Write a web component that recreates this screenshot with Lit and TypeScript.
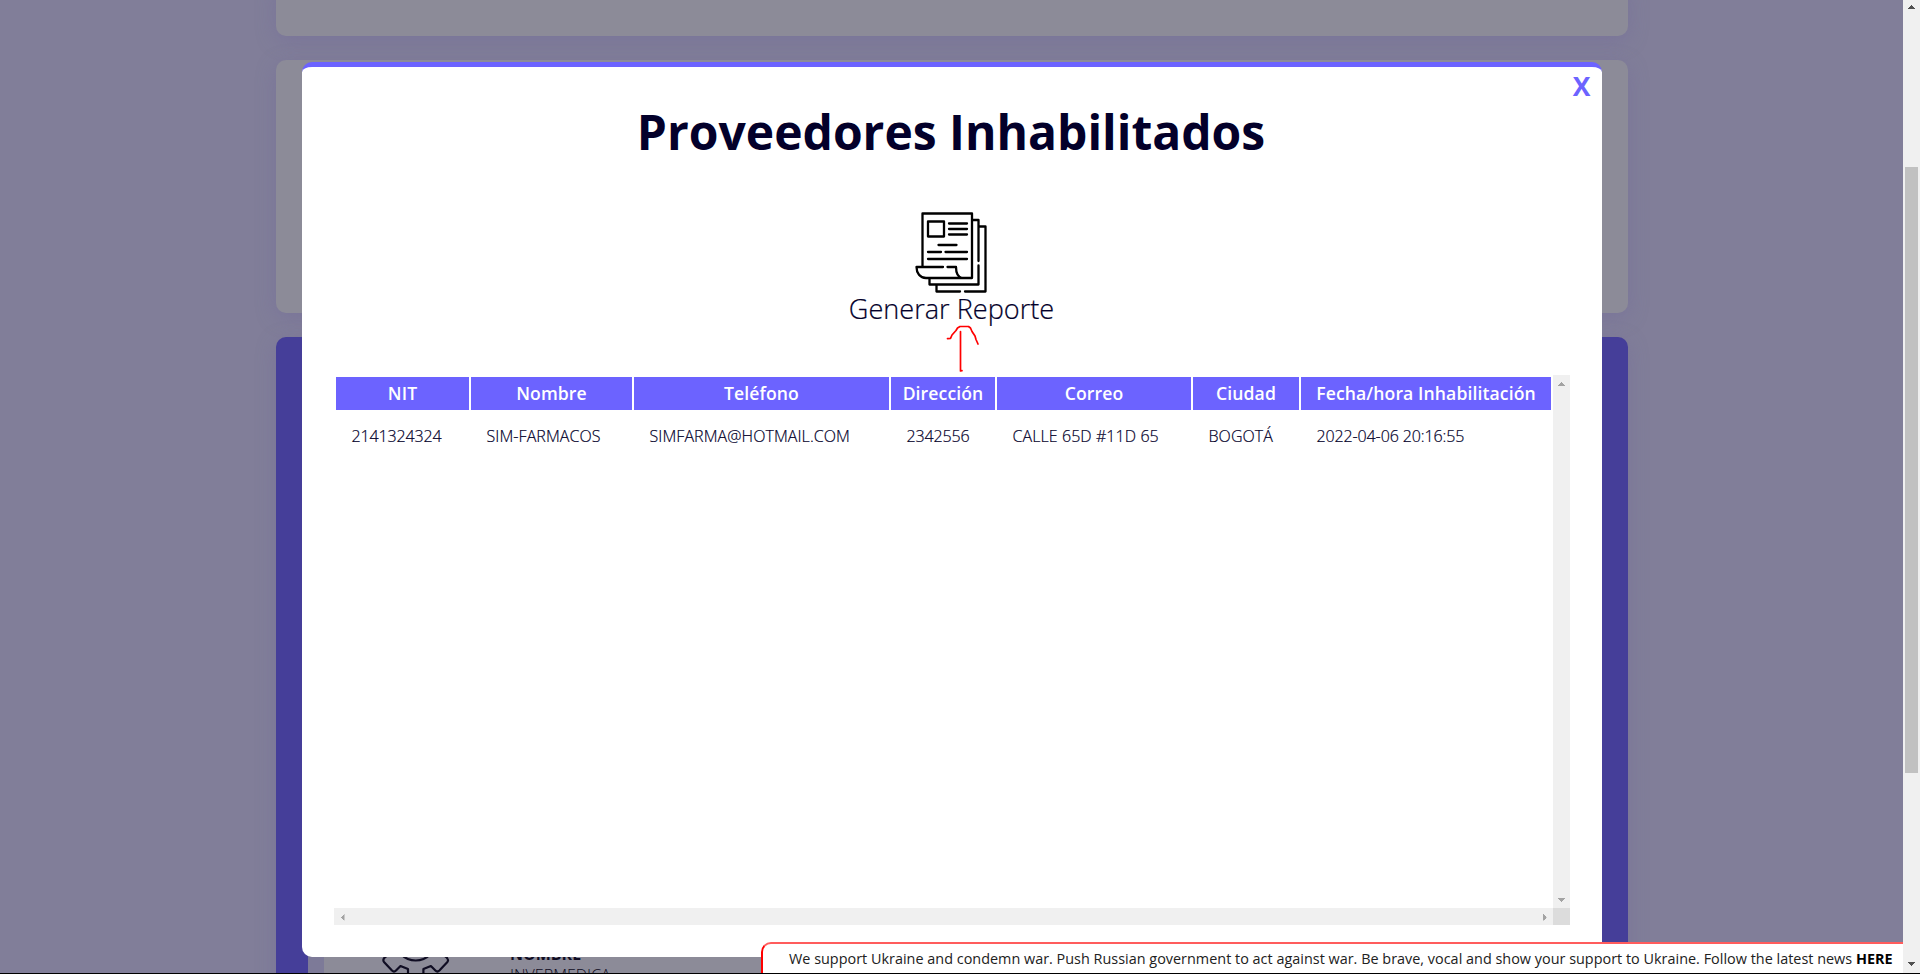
import { LitElement, html, css } from "lit";
import { customElement } from "lit/decorators.js";

const COLUMNS = ["NIT", "Nombre", "Teléfono", "Dirección", "Correo", "Ciudad", "Fecha/hora Inhabilitación"];
const ROWS = [["2141324324", "SIM-FARMACOS", "SIMFARMA@HOTMAIL.COM", "2342556", "CALLE 65D #11D 65", "BOGOTÁ", "2022-04-06 20:16:55"]];

const arrow = (dir: string) => html`<svg class="arrow ${dir}" width="7" height="4" viewBox="0 0 7 4" shape-rendering="crispEdges"><path d="M3 0h1v1h1v1h1v1h1v1H0V3h1V2h1V1h1z" fill="currentColor"/></svg>`;

@customElement("provider-table")
export class ProviderTable extends LitElement {
  static styles = css`
    :host { display: grid; grid-template-columns: 1fr 17px; grid-template-rows: 1fr 17px; background: #fff; }
    .view { padding: 2px; overflow: hidden; }
    .table { display: grid; grid-template-columns: 133px 161px 255px 104px 194px 106px 250px; column-gap: 2px; }
    .th { background: #6c63ff; color: #fff; height: 33px; line-height: 32px; text-align: center; font-weight: 600; font-size: 17.6px; letter-spacing: .1px; white-space: nowrap; }
    .td { height: 54px; line-height: 53px; padding-left: 15.5px; font-size: 16px; font-weight: 300; white-space: nowrap; -webkit-text-stroke: .2px #03002a; letter-spacing: .08px; }
    .num { letter-spacing: -.12px; }
    .bar { background: #f0f0f0; color: #a3a3a3; display: flex; justify-content: space-between; align-items: center; }
    .v { flex-direction: column; padding: 7px 0 6px; }
    .h { padding: 0 5px; }
    .corner { background: #dcdcdc; }
    .arrow { display: block; }
    .down { transform: rotate(180deg); }
    .left { transform: rotate(-90deg); }
    .right { transform: rotate(90deg); }
  `;
  render() {
    return html`
      <div class="view"><div class="table">
        ${COLUMNS.map((c) => html`<div class="th">${c}</div>`)}
        ${ROWS.map((r) => r.map((c) => html`<div class="td ${/^[\d\s:-]+$/.test(c) ? "num" : ""}">${c}</div>`))}
      </div></div>
      <div class="bar v">${arrow("up")}${arrow("down")}</div>
      <div class="bar h">${arrow("left")}${arrow("right")}</div>
      <div class="corner"></div>`;
  }
}

@customElement("app-root")
export class AppRoot extends LitElement {
  static styles = css`
    :host { display: block; position: relative; width: 1920px; height: 974px; overflow: hidden; font-family: "Open Sans", sans-serif; color: #03002a; box-sizing: border-box; }
    * { box-sizing: border-box; }
    .page { display: flex; height: 973px; background: #817e99; }
    .content { flex: 1; display: flex; flex-direction: column; align-items: center; gap: 24px; overflow: hidden; padding-left: 1px; }
    .card { width: 1352px; flex: none; background: #8c8b98; border-radius: 10px; box-shadow: 0 5px 20px rgba(108, 99, 155, .35); }
    .first { height: 56px; margin-top: -20px; }
    .second { height: 253px; }
    .third { height: 700px; background: #453e99; padding: 600px 32px 0; }
    .strip { height: 100px; background: #7d7a98; padding-left: 16px; }
    .inner { height: 100px; background: #8c8b98; display: flex; padding: 0 0 0 58px; color: #100d23; }
    .gear { margin-top: -24px; flex: none; }
    .info { margin: 6.5px 0 0 60px; line-height: 21px; font-size: 16px; }
    .info b { display: block; font-weight: 700; }
    .info span { font-weight: 300; }
    .scroll { width: 17px; background: #f0f0f0; color: #505050; display: flex; flex-direction: column; align-items: center; padding: 5px 0 7px; }
    .thumb { width: 13px; height: 606px; background: #c1c1c1; margin: 158px 0 auto; }
    .arrow { display: block; }
    .down { transform: rotate(180deg); }
    .modal { position: absolute; left: 302px; top: 62px; width: 1300px; height: 895px; background: #fff; border-top: 5px solid #6c63ff; border-radius: 10px; display: flex; flex-direction: column; align-items: center; }
    .close { position: absolute; right: 11.5px; top: 1px; font-weight: 700; font-size: 26.5px; line-height: 36px; color: #6c63ff; }
    h1 { margin: 32px 0 0; padding-right: 2px; font-size: 48px; line-height: 66px; font-weight: 700; white-space: nowrap; }
    .report { display: flex; flex-direction: column; align-items: center; margin-top: 47px; padding-right: 1px; }
    .label { font-size: 27.100px; line-height: 35px; margin-top: -2px; font-weight: 300; white-space: nowrap; -webkit-text-stroke: .2px #03002a; }
    provider-table { width: 1236px; height: 550px; margin: 49px 0 0; }
    .mark { position: absolute; left: 944px; top: 322px; }
    .banner { position: absolute; left: 761px; top: 942px; width: 1142px; height: 31px; background: #fff; border-top: 2px solid #ff5c5c; border-left: 2px solid #f00; border-radius: 10px 0 0 0; padding-left: 26px; font-size: 14.4px; line-height: 29.5px; letter-spacing: .015px; color: #212121; white-space: nowrap; font-weight: 400; }
    .banner b { color: #000; font-weight: 700; }
    .edge { height: 1px; background: #000; }
  `;
  render() {
    return html`
      <div class="page">
        <div class="content">
          <div class="card first"></div>
          <div class="card second"></div>
          <div class="card third"><div class="strip"><div class="inner">
            <svg class="gear" width="68" height="68" viewBox="0 0 68 68" fill="none" stroke="#100d23" stroke-width="2.2" stroke-linejoin="round"><circle cx="33.700" cy="27" r="20.500"/><path d="M4.500 43Q0 46 2 49L10 57.500Q12 59.500 14 57.500L18.500 53L26 56V64M62.900 43Q67.400 46 65.400 49L57.400 57.500Q55.400 59.500 53.400 57.500L48.900 53L41.400 56V64"/></svg>
            <div class="info"><b>NOMBRE</b><span>INVERMEDICA</span></div>
          </div></div></div>
        </div>
        <div class="scroll">
          ${arrow("up")}
          <div class="thumb"></div>
          ${arrow("down")}
        </div>
      </div>
      <div class="edge"></div>
      <div class="modal">
        <div class="close">X</div>
        <h1>Proveedores Inhabilitados</h1>
        <div class="report">
          <svg width="72" height="81" viewBox="0 0 72 81" fill="none" stroke="#000" stroke-width="2.3" stroke-linecap="round" stroke-linejoin="round">
            <path d="M7.500 54V1.500h49.500v64.500H11C5 66 1.500 61 1.500 55H28M32.500 55H41c0 6 2 10 6 11"/>
            <path d="M57.500 8H63.500v41M63.500 53.500V72.500H14.500v-6M63.500 14.500H70.500v65H50M45 79.500H21.500v-6.500"/>
            <path d="M13 9.500h16v15H13zM34 11.500h18M34 17h18M34 22.500h18M23.500 33h18M13 40h13M30.500 40h21.500M13 47h39"/>
          </svg>
          <div class="label">Generar Reporte</div>
        </div>
        <provider-table></provider-table>
      </div>
      <svg class="mark" width="40" height="54" viewBox="0 0 40 54" fill="none" stroke="#f00" stroke-width="1.700" stroke-linecap="round" stroke-linejoin="round"><path d="M3.500 16.700L6.500 16.300L8 13L12 8.500L13.500 6L16 4.500H24.500L26.500 6L28 9.500L31 14L32 17.500L34 22M16.500 9.500V49l1.500-.3"/></svg>
      <div class="banner">We support Ukraine and condemn war. Push Russian government to act against war. Be brave, vocal and show your support to Ukraine. Follow the latest news <b>HERE</b></div>
    `;
  }
}
